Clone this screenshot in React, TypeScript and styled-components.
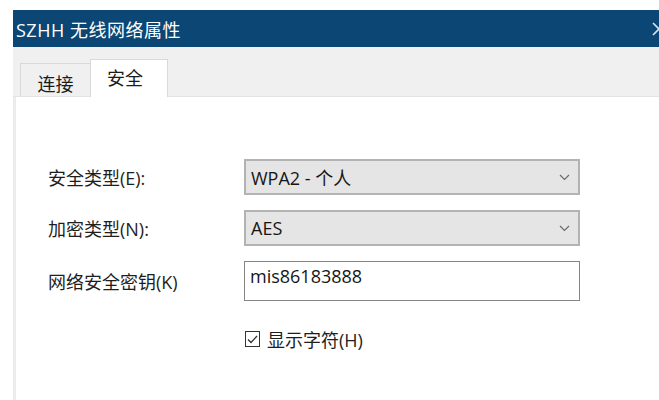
import React from "react";
import styled, { createGlobalStyle } from "styled-components";

const Global = createGlobalStyle`
  html, body { margin: 0; padding: 0; background: #ffffff; }
  body { font-family: "Open Sans", "Noto Sans CJK SC", sans-serif; color: #1b1b1b; }
  * { box-sizing: border-box; }
`;

const Page = styled.div`
  width: 659px;
  height: 400px;
  padding: 10px 0 0 13px;
  overflow: hidden;
  background: #ffffff;
`;

const Window = styled.div`
  display: flex;
  flex-direction: column;
  height: 390px;
`;

const TitleBar = styled.div`
  height: 37px;
  background: #0b4674;
  color: #ffffff;
  display: flex;
  align-items: center;
  justify-content: space-between;
  padding-left: 3px;
  font-size: 18px;
  letter-spacing: 0.5px;
  overflow: hidden;
`;

const CloseIcon = styled.svg`
  flex: none;
  margin-right: -7px;
`;

const TabStrip = styled.div`
  height: 50px;
  background: #f0f0f0;
  display: flex;
  align-items: flex-end;
  padding-left: 7px;
  border-bottom: 1px solid #e3e3e3;
`;

const Tab = styled.div<{ $active?: boolean }>`
  width: ${(p) => (p.$active ? 78 : 70)}px;
  height: ${(p) => (p.$active ? 38 : 33)}px;
  background: ${(p) => (p.$active ? "#ffffff" : "#f0f0f0")};
  border: 1px solid #d9d9d9;
  border-bottom: none;
  ${(p) => (p.$active ? "margin-bottom: -1px;" : "border-right: none;")}
  display: flex;
  justify-content: center;
  align-items: ${(p) => (p.$active ? "flex-start" : "center")};
  padding-top: ${(p) => (p.$active ? "4px" : "5px")};
  padding-right: ${(p) => (p.$active ? "8px" : "0")};
  font-size: 18px;
  color: #1b1b1b;
`;

const Content = styled.div`
  flex: 1;
  background: #ffffff;
  border-left: 3px solid #ececec;
  padding: 62px 0 0 32px;
  display: flex;
  flex-direction: column;
`;

const Form = styled.div`
  display: grid;
  grid-template-columns: 196px 336px;
  row-gap: 15px;
  align-items: center;
`;

const Label = styled.div`
  font-size: 18px;
  color: #1e1e1e;
`;

const Select = styled.div`
  height: 36px;
  background: #e5e5e5;
  border: 2px solid #b3b3b3;
  display: flex;
  align-items: center;
  justify-content: space-between;
  padding: 0 8px 0 5px;
  font-size: 18px;
  color: #161616;
`;

const Input = styled.div`
  height: 40px;
  background: #ffffff;
  border: 1.5px solid #858585;
  display: flex;
  align-items: flex-start;
  padding: 2px 0 0 5px;
  font-size: 18px;
  color: #161616;
`;

const CheckRow = styled.label`
  grid-column: 2;
  display: flex;
  align-items: center;
  gap: 7px;
  margin-top: 10px;
  font-size: 18px;
  color: #1e1e1e;
`;

const Box = styled.span`
  width: 15px;
  height: 16px;
  border: 1.5px solid #333333;
  display: inline-flex;
  align-items: center;
  justify-content: center;
  margin-left: 1px;
`;

const Chevron = () => (
  <svg width="11" height="7" viewBox="0 0 11 7">
    <path d="M1 1 L5.5 5.5 L10 1" fill="none" stroke="#6b6b6b" strokeWidth="1.2" />
  </svg>
);

export default function App() {
  return (
    <Page>
      <Global />
      <Window>
        <TitleBar>
          <span>SZHH 无线网络属性</span>
          <CloseIcon width="14" height="14" viewBox="0 0 14 14">
            <path d="M1 1 L13 13 M13 1 L1 13" stroke="#d4e3ef" strokeWidth="1.6" fill="none" />
          </CloseIcon>
        </TitleBar>
        <TabStrip>
          <Tab>连接</Tab>
          <Tab $active>安全</Tab>
        </TabStrip>
        <Content>
          <Form>
            <Label>安全类型(E):</Label>
            <Select>
              <span>WPA2 - 个人</span>
              <Chevron />
            </Select>
            <Label>加密类型(N):</Label>
            <Select>
              <span>AES</span>
              <Chevron />
            </Select>
            <Label>网络安全密钥(K)</Label>
            <Input>mis86183888</Input>
            <CheckRow>
              <Box>
                <svg width="11" height="9" viewBox="0 0 11 9">
                  <path d="M1 4.5 L4 7.5 L10 1" fill="none" stroke="#333" strokeWidth="1.3" />
                </svg>
              </Box>
              显示字符(H)
            </CheckRow>
          </Form>
        </Content>
      </Window>
    </Page>
  );
}
